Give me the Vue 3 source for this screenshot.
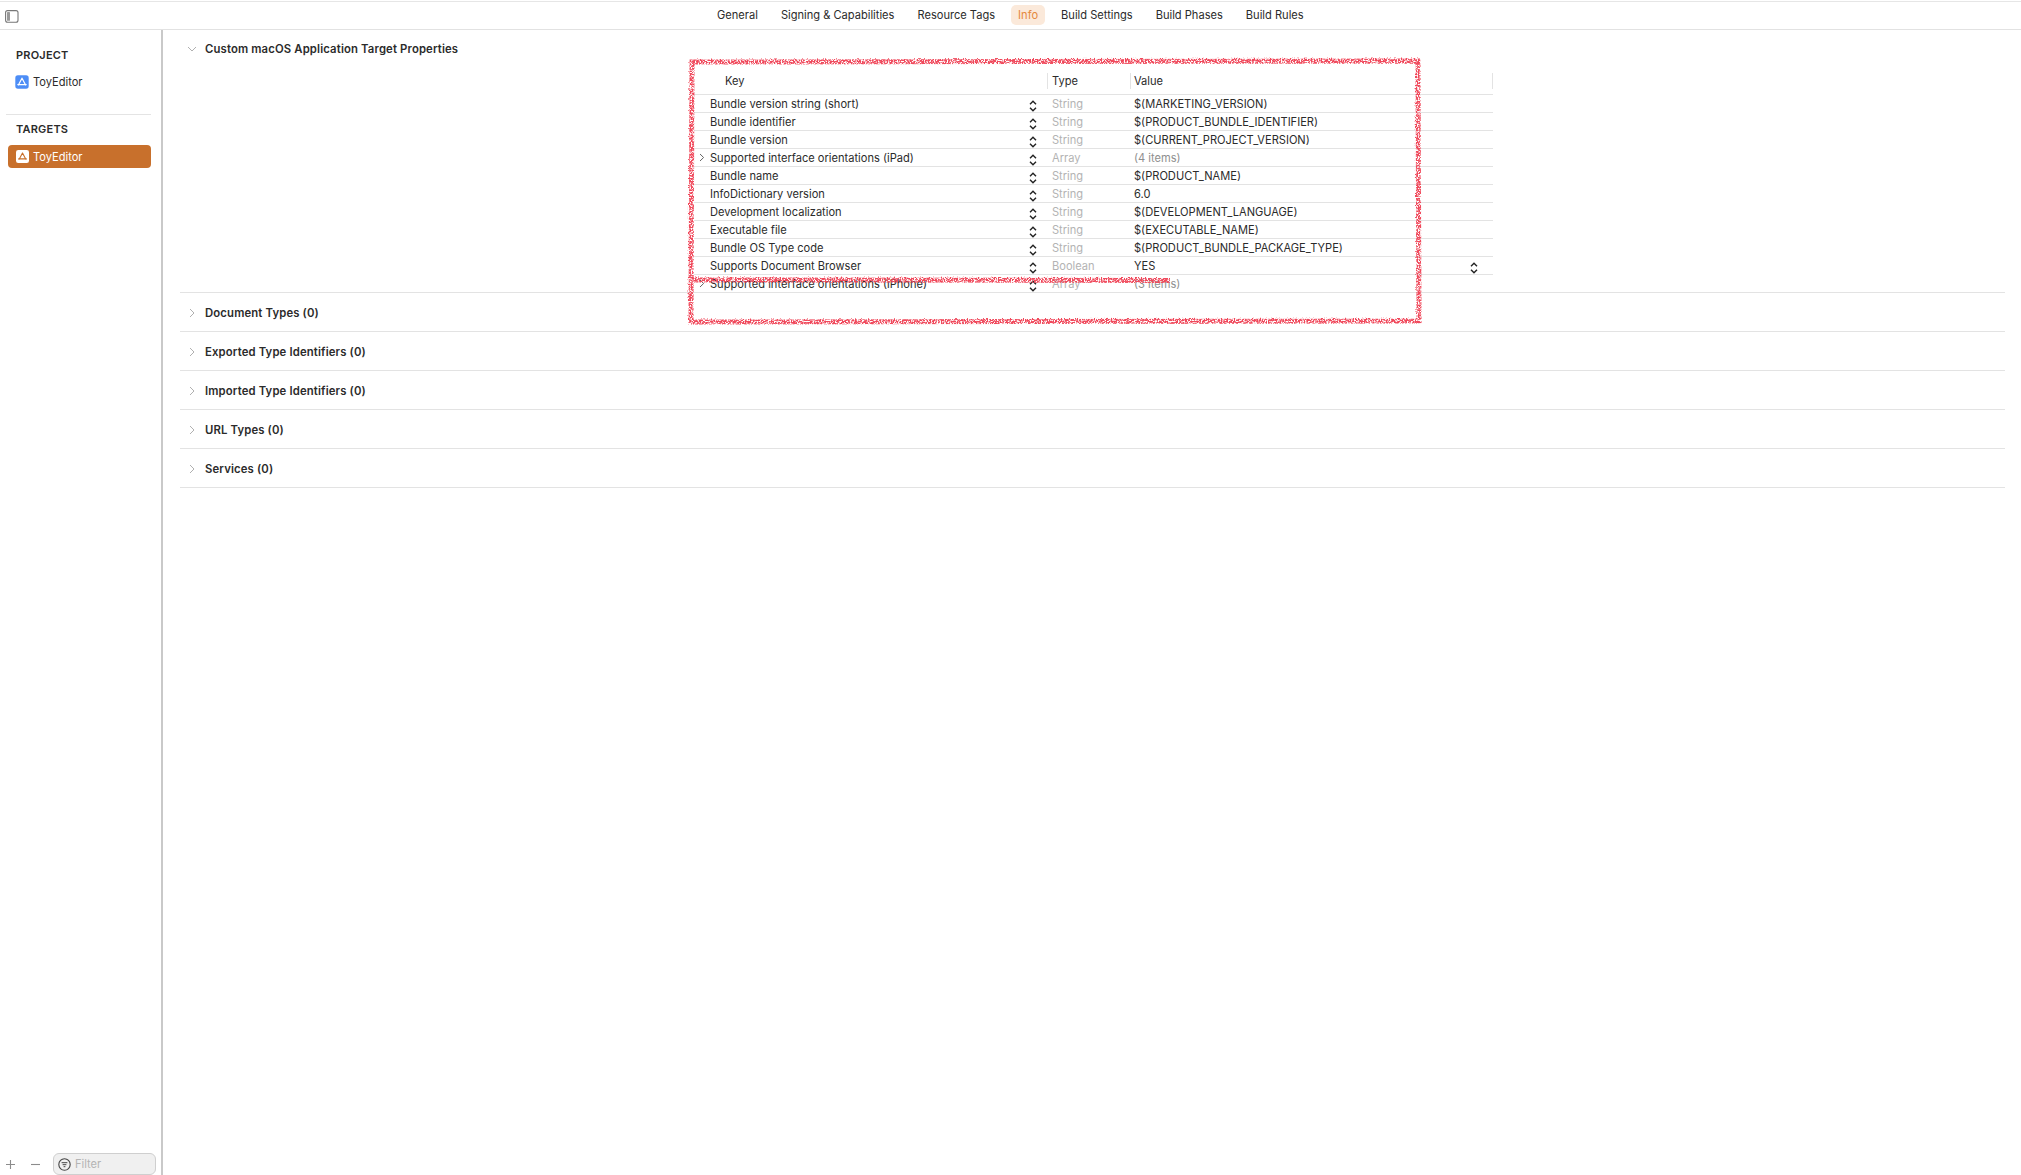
<template>
  <div class="page">
    <header class="toolbar">
      <svg class="panel-icon" width="14" height="13" viewBox="0 0 14 13">
        <rect x="0.6" y="0.6" width="12.4" height="11.6" rx="2" fill="none" stroke="#777" stroke-width="1.1" />
        <rect x="2" y="2" width="3" height="8.8" rx="0.6" fill="#999" />
      </svg>
      <nav class="tabs">
        <span v-for="tab in tabs" :key="tab" class="tab" :class="{ active: tab === 'Info' }">{{ tab }}</span>
      </nav>
    </header>

    <div class="body">
      <aside class="sidebar">
        <div class="side-title">PROJECT</div>
        <div class="side-item">
          <svg class="app-icon" width="14" height="14" viewBox="0 0 14 14">
            <rect x="0.3" y="0.3" width="13.4" height="13.4" rx="2.6" fill="#4d8df6" />
            <path d="M7 3.2 L3.4 10 M7 3.2 L10.6 10 M2.8 9.6 H11.2" stroke="#fff" stroke-width="1.2" fill="none" stroke-linecap="round" />
          </svg>
          ToyEditor
        </div>
        <div class="side-divider"></div>
        <div class="side-title">TARGETS</div>
        <div class="side-item selected">
          <svg class="app-icon" width="13" height="13" viewBox="0 0 14 14">
            <rect x="0" y="0" width="14" height="14" rx="2.4" fill="#fff" />
            <path d="M7 3.2 L3.4 10 M7 3.2 L10.6 10 M2.8 9.6 H11.2" stroke="#c8702c" stroke-width="1.2" fill="none" stroke-linecap="round" />
          </svg>
          ToyEditor
        </div>
        <div class="side-footer">
          <span class="glyph-btn">
            <svg width="11" height="11" viewBox="0 0 11 11"><path d="M5.5 1 V10 M1 5.5 H10" stroke="#8c8c8c" stroke-width="1.1" /></svg>
          </span>
          <span class="glyph-btn">
            <svg width="11" height="11" viewBox="0 0 11 11"><path d="M1 5.5 H10" stroke="#8c8c8c" stroke-width="1.1" /></svg>
          </span>
          <div class="filter">
            <svg width="13" height="13" viewBox="0 0 13 13">
              <circle cx="6.5" cy="6.5" r="5.7" fill="none" stroke="#444" stroke-width="1.1" />
              <path d="M3.6 4.7 H9.4 M4.6 6.7 H8.4 M5.6 8.7 H7.4" stroke="#444" stroke-width="1" />
            </svg>
            <span>Filter</span>
          </div>
        </div>
      </aside>

      <main class="main">
        <section class="section open">
          <div class="section-head first">
            <svg class="chev" width="10" height="10" viewBox="0 0 10 10"><path d="M1 3 L5 7 L9 3" fill="none" stroke="#b0b0b0" stroke-width="1" /></svg>
            Custom macOS Application Target Properties
          </div>
          <div class="plist">
            <div class="plist-head">
              <div class="col-key">Key</div>
              <div class="col-type"><i class="tick"></i>Type</div>
              <div class="col-value"><i class="tick"></i>Value<i class="tick end"></i></div>
            </div>
            <div v-for="row in rows" :key="row.key" class="plist-row">
              <div class="cell-key">
                <svg v-if="row.expand" class="row-chev" width="6" height="9" viewBox="0 0 6 9"><path d="M1 1 L4.6 4.5 L1 8" fill="none" stroke="#666" stroke-width="1" /></svg>
                <span>{{ row.key }}</span>
                <svg class="stepper" width="8" height="12" viewBox="0 0 8 12"><path d="M1 4.2 L4 1.2 L7 4.2 M1 7.8 L4 10.8 L7 7.8" fill="none" stroke="#222" stroke-width="1.4" /></svg>
              </div>
              <div class="cell-type">{{ row.type }}</div>
              <div class="cell-value" :class="{ muted: row.expand }">
                <span>{{ row.value }}</span>
                <svg v-if="row.type === 'Boolean'" class="stepper" width="8" height="12" viewBox="0 0 8 12"><path d="M1 4.2 L4 1.2 L7 4.2 M1 7.8 L4 10.8 L7 7.8" fill="none" stroke="#222" stroke-width="1.4" /></svg>
              </div>
            </div>
          </div>
        </section>

        <section v-for="name in closedSections" :key="name" class="section">
          <div class="section-head">
            <svg class="chev" width="10" height="10" viewBox="0 0 10 10"><path d="M3 1 L7 5 L3 9" fill="none" stroke="#b0b0b0" stroke-width="1" /></svg>
            {{ name }}
          </div>
        </section>
      </main>
    </div>

    <!-- hand drawn red marker over the table -->
    <svg class="marker" width="760" height="290" viewBox="0 0 760 290">
      <defs>
        <filter id="rough" x="-5%" y="-5%" width="110%" height="110%">
          <feTurbulence type="fractalNoise" baseFrequency="0.7" numOctaves="2" seed="4" result="noise" />
          <feDisplacementMap in="SourceGraphic" in2="noise" scale="3.5" result="moved" />
          <feColorMatrix in="noise" type="matrix" values="0 0 0 0 0  0 0 0 0 0  0 0 0 0 0  0 0 0 5 -1.75" result="speck" />
          <feComposite in="moved" in2="speck" operator="in" result="rough" />
          <feGaussianBlur in="rough" stdDeviation="0.5" />
        </filter>
      </defs>
      <g filter="url(#rough)" fill="none" stroke="#f04a5c" stroke-width="5">
        <path d="M12 12 L738 11 L739 271 L11 272 Z" />
        <path d="M12 230 L490 230.5" />
      </g>
    </svg>
  </div>
</template>

<script setup>
const tabs = ['General', 'Signing & Capabilities', 'Resource Tags', 'Info', 'Build Settings', 'Build Phases', 'Build Rules']

const rows = [
  { key: 'Bundle version string (short)', type: 'String', value: '$(MARKETING_VERSION)' },
  { key: 'Bundle identifier', type: 'String', value: '$(PRODUCT_BUNDLE_IDENTIFIER)' },
  { key: 'Bundle version', type: 'String', value: '$(CURRENT_PROJECT_VERSION)' },
  { key: 'Supported interface orientations (iPad)', type: 'Array', value: '(4 items)', expand: true },
  { key: 'Bundle name', type: 'String', value: '$(PRODUCT_NAME)' },
  { key: 'InfoDictionary version', type: 'String', value: '6.0' },
  { key: 'Development localization', type: 'String', value: '$(DEVELOPMENT_LANGUAGE)' },
  { key: 'Executable file', type: 'String', value: '$(EXECUTABLE_NAME)' },
  { key: 'Bundle OS Type code', type: 'String', value: '$(PRODUCT_BUNDLE_PACKAGE_TYPE)' },
  { key: 'Supports Document Browser', type: 'Boolean', value: 'YES' },
  { key: 'Supported interface orientations (iPhone)', type: 'Array', value: '(3 items)', expand: true },
]

const closedSections = [
  'Document Types (0)',
  'Exported Type Identifiers (0)',
  'Imported Type Identifiers (0)',
  'URL Types (0)',
  'Services (0)',
]
</script>

<style>
html,
body {
  margin: 0;
  background: #fff;
}
</style>

<style scoped>
.page {
  position: relative;
  width: 2021px;
  height: 1175px;
  overflow: hidden;
  display: flex;
  flex-direction: column;
  background: #fff;
  font-family: Inter, "Liberation Sans", sans-serif;
  font-size: 11.1px;
  color: #2b2b2b;
}

.toolbar {
  position: relative;
  box-sizing: border-box;
  height: 29px;
  margin-top: 1px;
  border-top: 1px solid #e6e6e6;
  border-bottom: 1px solid #e2e2e2;
  flex: none;
}

.panel-icon {
  position: absolute;
  left: 5px;
  top: 8px;
}

.tabs {
  display: flex;
  align-items: center;
  height: 26px;
  margin-left: 708px;
}

.tab {
  padding: 0 9px;
  line-height: 20px;
  margin-right: 5px;
  border-radius: 5px;
  white-space: nowrap;
}

.tab.active {
  background: #fbe9da;
  color: #e5883c;
  padding: 0 7px;
  margin: 0 7px 0 2px;
}

.body {
  flex: 1;
  display: flex;
  min-height: 0;
}

.sidebar {
  position: relative;
  box-sizing: border-box;
  width: 163px;
  flex: none;
  padding: 17px 10px 0 6px;
  border-right: 2px solid #c9c9c9;
}

.side-title {
  padding-left: 10px;
  font-weight: 600;
  font-size: 11px;
  letter-spacing: 0.2px;
  line-height: 16px;
}

.side-item {
  display: flex;
  align-items: center;
  gap: 4px;
  height: 23px;
  margin-top: 7px;
  padding-left: 9px;
  border-radius: 4px;
}

.side-item.selected {
  margin-top: 8px;
  margin-left: 2px;
  padding-left: 8px;
  background: #c8702c;
  color: #fff;
}

.side-divider {
  height: 1px;
  background: #e4e4e4;
  margin: 21px 0 6px;
}

.side-footer {
  position: absolute;
  left: 0;
  right: 0;
  bottom: 0;
  height: 22px;
  display: flex;
  align-items: center;
  padding-left: 5px;
}

.glyph-btn {
  width: 25px;
  display: flex;
}

.filter {
  box-sizing: border-box;
  width: 103px;
  height: 22px;
  margin-left: -2px;
  display: flex;
  align-items: center;
  gap: 4px;
  padding-left: 4px;
  background: #f0f0f0;
  border: 1px solid #cfcfcf;
  border-radius: 6px;
  color: #b4b4b4;
}

.main {
  flex: 1;
  min-width: 0;
  padding: 0 16px 0 17px;
}

.section {
  border-bottom: 1px solid #e3e3e3;
}

.section-head {
  box-sizing: border-box;
  display: flex;
  align-items: center;
  height: 38px;
  padding-top: 2px;
  font-weight: 600;
  font-size: 11.3px;
  letter-spacing: 0.15px;
}

.section-head.first {
  padding-top: 0;
}

.chev {
  margin: 0 8px 0 7px;
}

.plist {
  width: 799px;
  margin: 5px 0 -1px 514px;
}

.plist-head {
  display: flex;
  height: 22px;
  border-bottom: 1px solid #e3e3e3;
  box-sizing: border-box;
  line-height: 17px;
}

.col-key {
  width: 353px;
  padding-left: 31px;
  box-sizing: border-box;
}

.col-type,
.col-value {
  position: relative;
  box-sizing: border-box;
}

.col-type {
  width: 83px;
  padding-left: 5px;
}

.col-value {
  flex: 1;
  padding-left: 4px;
}

.tick {
  position: absolute;
  left: 0;
  top: 0;
  width: 1px;
  height: 16px;
  background: #e3e3e3;
}

.tick.end {
  left: auto;
  right: 0;
}

.plist-row {
  display: flex;
  height: 18px;
  box-sizing: border-box;
  border-bottom: 1px solid #e3e3e3;
  line-height: 18px;
}

.cell-key {
  position: relative;
  width: 353px;
  padding-left: 16px;
  box-sizing: border-box;
  white-space: nowrap;
}

.row-chev {
  position: absolute;
  left: 5px;
  top: 4px;
}

.stepper {
  position: absolute;
  right: 10px;
  top: 5px;
}

.cell-type {
  width: 83px;
  padding-left: 5px;
  box-sizing: border-box;
  color: #b3b3b3;
}

.cell-value {
  position: relative;
  flex: 1;
  padding-left: 4px;
}

.cell-value.muted {
  color: #8f8f8f;
}

.cell-value .stepper {
  right: 15px;
}

.marker {
  position: absolute;
  left: 680px;
  top: 50px;
  pointer-events: none;
}
</style>
